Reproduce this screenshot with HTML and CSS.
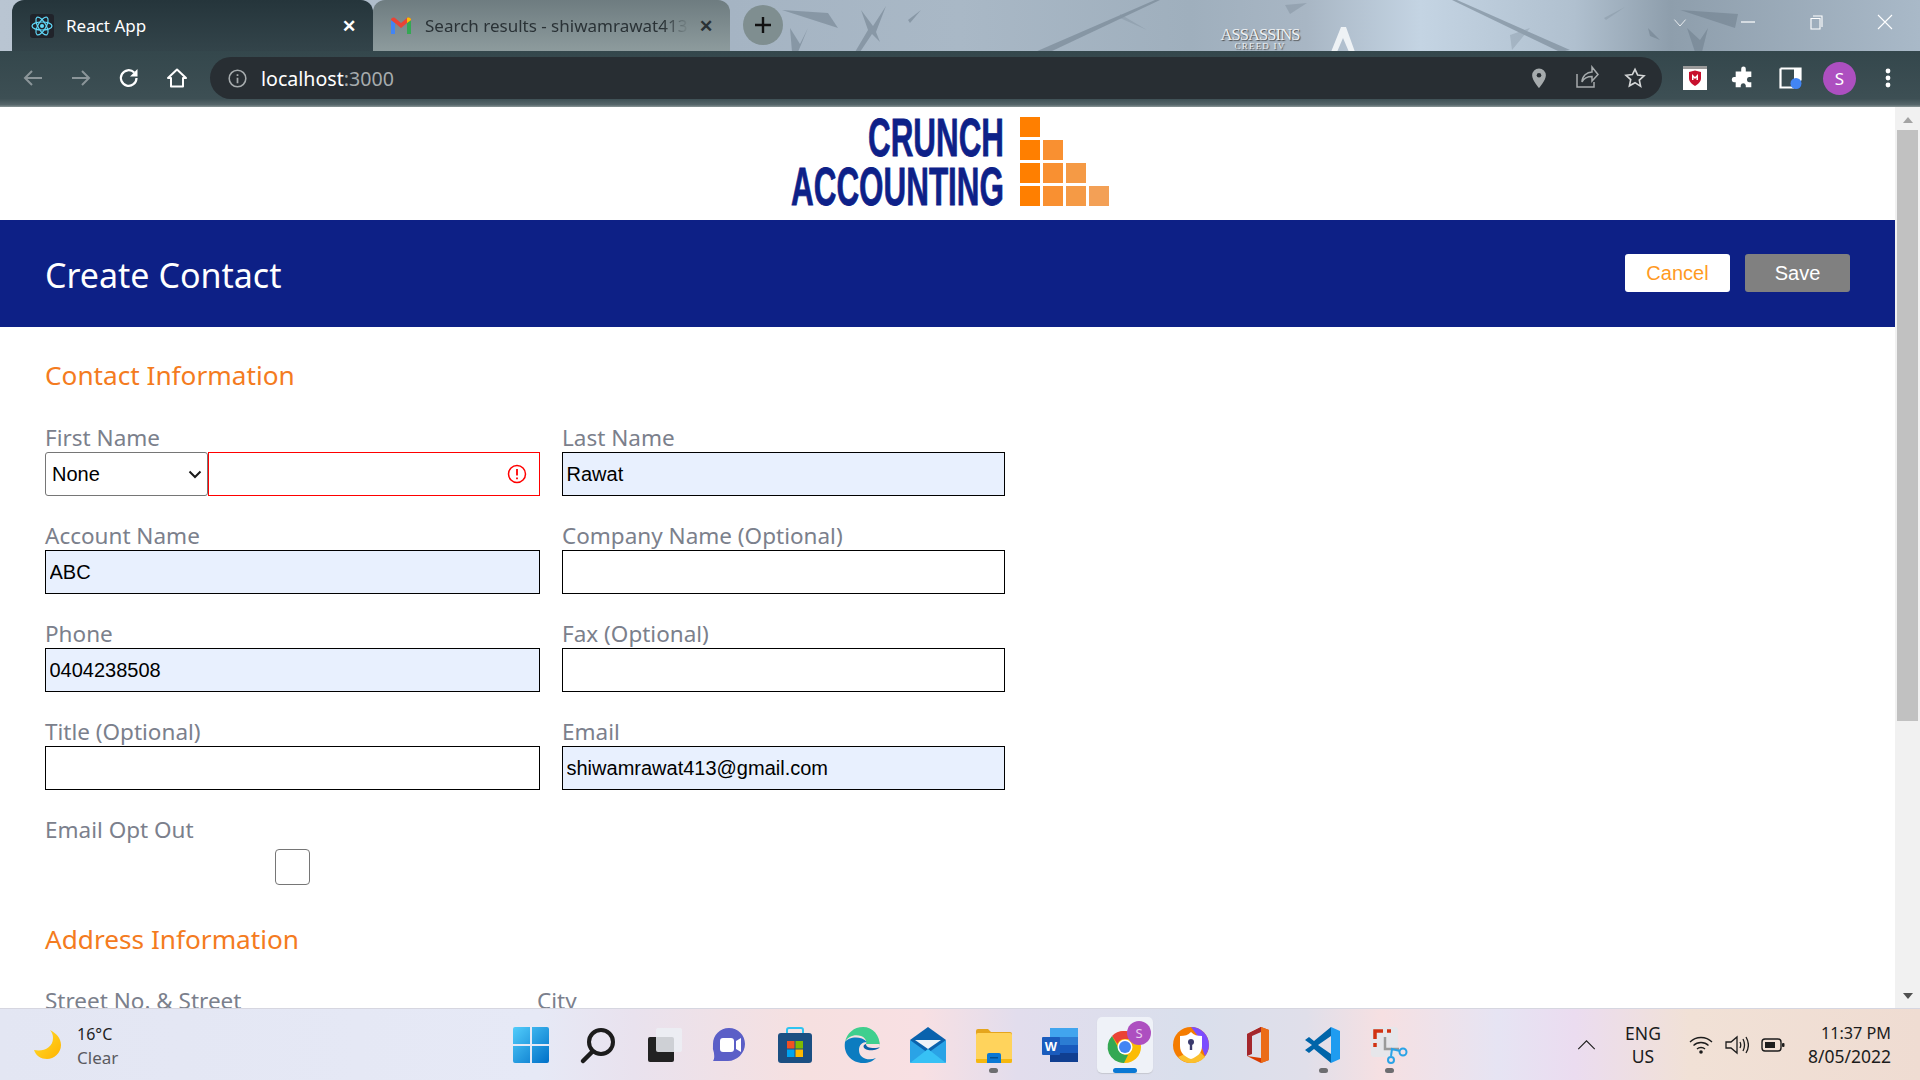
FILE: index.html
```html
<!DOCTYPE html>
<html lang="en">
<head>
<meta charset="utf-8">
<title>React App</title>
<link rel="stylesheet" href="styles.css">
</head>
<body>
<div class="browser">
  <svg class="theme" viewBox="0 0 1920 52" preserveAspectRatio="none" aria-hidden="true">
    <defs>
      <linearGradient id="sky" x1="0" x2="1" y1="0" y2="0">
        <stop offset="0" stop-color="#b9c5d2"/><stop offset=".38" stop-color="#a5b4c3"/><stop offset=".5" stop-color="#a9b8c6"/>
        <stop offset=".62" stop-color="#9fafbd"/><stop offset=".68" stop-color="#a8b6c4"/><stop offset=".74" stop-color="#c4d4e3"/><stop offset=".82" stop-color="#b0c0cf"/><stop offset=".87" stop-color="#8e9eac"/><stop offset="1" stop-color="#a9b9c8"/>
      </linearGradient>
    </defs>
    <rect width="1920" height="52" fill="url(#sky)"/>
    <g fill="#6f7f8d" opacity=".55">
      <polygon points="782,10 828,13 838,28"/>
      <polygon points="790,28 800,44 808,28 798,52 792,52"/>
      <polygon points="861,10 873,26 886,6 876,32 880,42 872,34 860,52 855,52 868,30"/>
      <polygon points="908,20 921,10 910,23"/>
      <polygon points="1035,52 1155,0 1160,0 1050,52"/>
      <polygon points="1120,14 1147,30 1120,18" opacity=".5"/>
      <polygon points="1285,5 1307,3 1290,14" opacity=".6"/>
      <polygon points="1452,0 1457,0 1570,50 1560,52"/>
      <polygon points="1510,35 1530,28 1512,50" opacity=".5"/>
      <polygon points="1604,18 1625,7 1606,20" opacity=".5"/>
      <polygon points="1680,10 1738,14 1735,28"/>
      <polygon points="1648,28 1660,40 1650,36"/>
      <polygon points="1687,28 1700,40 1708,28 1702,52 1695,52"/>
    </g>
    <g fill="#eef2f5">
      <polygon points="1331,52 1341,27 1346,27 1355,52 1349,52 1343,38 1337,52"/>
    </g>
  </svg>

  <header class="tabstrip">
    <div class="tab tab-active">
      <svg class="tab-icon" viewBox="0 0 24 24"><rect width="24" height="24" rx="3" fill="#20232a"/><g fill="none" stroke="#61dafb" stroke-width="1.2"><ellipse cx="12" cy="12" rx="10" ry="4"/><ellipse cx="12" cy="12" rx="10" ry="4" transform="rotate(60 12 12)"/><ellipse cx="12" cy="12" rx="10" ry="4" transform="rotate(120 12 12)"/></g><circle cx="12" cy="12" r="2" fill="#61dafb"/></svg>
      <span class="tab-title">React App</span>
      <span class="tab-close">✕</span>
    </div>
    <div class="tab tab-idle">
      <svg class="tab-icon" viewBox="0 0 24 24"><path d="M2 20V6l4 3v11z" fill="#4285f4"/><path d="M18 20V9l4-3v14z" fill="#34a853"/><path d="M2 6c0-2 2-3 4-2l6 5 6-5c2-1 4 0 4 2l-4 3-6 5-6-5z" fill="#ea4335"/><path d="M18 4c2-1 4 0 4 2l-4 3z" fill="#fbbc04"/></svg>
      <span class="tab-title tab-fade">Search results - shiwamrawat413</span>
      <span class="tab-close">✕</span>
    </div>
    <button class="newtab" aria-label="New tab"><svg viewBox="0 0 20 20"><path d="M10 2v16M2 10h16" stroke="#111" stroke-width="2.4"/></svg></button>
    <div class="ac-logo"><span class="ac-name">ASSASSINS</span><span class="ac-sub">CREED IV</span></div>
    <div class="winctl">
      <svg viewBox="0 0 20 20" class="wc wc-chev"><path d="M3 7l7 8 7-8" fill="none" stroke="#fff" stroke-width="1"/></svg>
      <svg viewBox="0 0 20 20" class="wc wc-min"><path d="M3 10h14" stroke="#fff" stroke-width="1.2"/></svg>
      <svg viewBox="0 0 20 20" class="wc"><path d="M6 4h9v11M4 6.500h9V17H4z" fill="none" stroke="#fff" stroke-width="1.1"/></svg>
      <svg viewBox="0 0 20 20" class="wc wc-last"><path d="M3 3l14 14M17 3L3 17" stroke="#fff" stroke-width="1.1"/></svg>
    </div>
  </header>

  <nav class="toolbar">
    <div class="tb-nav">
      <svg viewBox="0 0 24 24" class="tb-ic"><path d="M21 12H4M11 5l-7 7 7 7" fill="none" stroke="#8b9599" stroke-width="2"/></svg>
      <svg viewBox="0 0 24 24" class="tb-ic"><path d="M3 12h17M13 5l7 7-7 7" fill="none" stroke="#8b9599" stroke-width="2"/></svg>
      <svg viewBox="0 0 24 24" class="tb-ic"><path d="M19.500 12a7.800 7.800 0 1 1-2.300-5.500" fill="none" stroke="#fff" stroke-width="2.2"/><path d="M20.500 3v7.500H13z" fill="#fff"/></svg>
      <svg viewBox="0 0 24 24" class="tb-ic"><path d="M12 3.500l9 8.500h-3v8.500H6V12H3z" fill="none" stroke="#fff" stroke-width="2" stroke-linejoin="round"/></svg>
    </div>
    <div class="omnibox">
      <svg viewBox="0 0 24 24" class="om-info"><circle cx="12" cy="12" r="9.500" fill="none" stroke="#a6abad" stroke-width="1.800"/><path d="M12 11v6.500M12 7v2" stroke="#a6abad" stroke-width="2"/></svg>
      <span class="url">localhost<span class="url-dim">:3000</span></span>
      <span class="om-spacer"></span>
      <svg viewBox="0 0 24 24" class="om-ic om-pin"><path d="M12 1.500a7.500 7.500 0 0 0-7.500 7.500c0 5.500 7.500 14 7.500 14s7.500-8.500 7.500-14A7.500 7.500 0 0 0 12 1.500z" fill="#a6abad"/><circle cx="12" cy="9" r="2.500" fill="#282e33"/></svg>
      <svg viewBox="0 0 24 24" class="om-ic om-share"><path d="M2 9v13h17v-5M7 17c0-6 5-10 10-10V2l6 7.500-6 6.500v-4.500c-4 0-8 1.500-10 5.500z" fill="none" stroke="#a6abad" stroke-width="1.500"/></svg>
      <svg viewBox="0 0 24 24" class="om-ic"><path d="M12 2.500l2.900 6.300 6.900.8-5.100 4.700 1.400 6.800L12 17.100l-6.100 3.400 1.400-6.800-5.100-4.700 6.900-.8z" fill="none" stroke="#d4d6d7" stroke-width="1.800"/></svg>
    </div>
    <div class="tb-ext">
      <svg viewBox="0 0 24 24" class="tb-ic"><rect x="0" y="0" width="24" height="24" fill="#fff"/><rect width="24" height="3" fill="#9a9a9a"/><path d="M6 6l6-1.500L18 6v6c0 4-3 6-6 8-3-2-6-4-6-8z" fill="#c8102e"/><path d="M9 8l3 3 3-3v6h-1.500v-2.500L12 13l-1.500-1.500V14H9z" fill="#fff"/></svg>
      <svg viewBox="0 0 24 24" class="tb-ic"><path d="M10 2a2.500 2.500 0 0 1 5 0v3h6v6h-2.500a2.800 2.800 0 0 0 0 5.500H21V22h-6v-2a2.800 2.800 0 0 0-5.500 0v2H4v-5.500H2a2.800 2.800 0 0 1 0-5.500h2V5h6z" fill="#fff" transform="translate(1 1) scale(.92)"/></svg>
      <svg viewBox="0 0 24 24" class="tb-ic"><path d="M1.500 2.500h20v12M15 21.500H1.500v-19" fill="none" stroke="#fff" stroke-width="2.200"/><rect x="15" y="2" width="7" height="14" fill="#fff"/><circle cx="17" cy="17.500" r="5.500" fill="#4285f4"/></svg>
      <span class="avatar">S</span>
      <svg viewBox="0 0 24 24" class="tb-ic"><g fill="#fff"><circle cx="12" cy="5" r="2.400"/><circle cx="12" cy="12" r="2.400"/><circle cx="12" cy="19" r="2.400"/></g></svg>
    </div>
  </nav>

  <main class="viewport">
    <div class="page">
      <div class="logo-row">
        <svg class="logo" viewBox="0 0 330 114" role="img" aria-label="Crunch Accounting">
          <text class="logo-text" x="87" y="49" textLength="136" lengthAdjust="spacingAndGlyphs">CRUNCH</text>
          <text class="logo-text" x="10" y="98" textLength="213" lengthAdjust="spacingAndGlyphs">ACCOUNTING</text>
          <g fill="#ff7f00"><rect x="239" y="10" width="20" height="20"/><rect x="239" y="33" width="20" height="20"/><rect x="239" y="56" width="20" height="20"/><rect x="239" y="79" width="20" height="20"/></g>
          <g fill="#f99031"><rect x="262" y="33" width="20" height="20"/><rect x="262" y="56" width="20" height="20"/><rect x="262" y="79" width="20" height="20"/></g>
          <g fill="#f59a45"><rect x="285" y="56" width="20" height="20"/><rect x="285" y="79" width="20" height="20"/></g>
          <rect x="308" y="79" width="20" height="20" fill="#f3a056"/>
        </svg>
      </div>
      <section class="banner">
        <h1 class="banner-title">Create Contact</h1>
        <div class="banner-actions">
          <button class="btn btn-cancel">Cancel</button>
          <button class="btn btn-save">Save</button>
        </div>
      </section>
      <form class="form">
        <h2 class="section">Contact Information</h2>
        <div class="fields">
          <div class="field">
            <label class="label">First Name</label>
            <div class="name-pair">
              <div class="select-wrap">
                <select class="salutation"><option>None</option></select>
                <svg viewBox="0 0 14 9" class="select-chev"><path d="M1.500 1.500L7 7l5.500-5.500" fill="none" stroke="#1a1a1a" stroke-width="2"/></svg>
              </div>
              <div class="invalid">
                <svg viewBox="0 0 20 20" class="alert"><circle cx="10" cy="10" r="8.500" fill="none" stroke="#f00" stroke-width="1.500"/><path d="M10 5v6.500M10 13.500v1.800" stroke="#f00" stroke-width="1.800"/></svg>
              </div>
            </div>
          </div>
          <div class="field"><label class="label">Last Name</label><input class="input filled" value="Rawat"></div>
          <div class="field"><label class="label">Account Name</label><input class="input filled" value="ABC"></div>
          <div class="field"><label class="label">Company Name (Optional)</label><input class="input"></div>
          <div class="field"><label class="label">Phone</label><input class="input filled" value="0404238508"></div>
          <div class="field"><label class="label">Fax (Optional)</label><input class="input"></div>
          <div class="field"><label class="label">Title (Optional)</label><input class="input"></div>
          <div class="field"><label class="label">Email</label><input class="input filled" value="shiwamrawat413@gmail.com"></div>
          <div class="field"><label class="label">Email Opt Out</label><span class="check-wrap"><span class="check"></span></span></div>
        </div>
        <h2 class="section section-addr">Address Information</h2>
        <div class="addr-labels">
          <label class="label addr-street">Street No. &amp; Street</label>
          <label class="label">City</label>
        </div>
      </form>
    </div>
    <div class="scrollbar">
      <span class="sb-arrow sb-up"></span>
      <span class="sb-thumb"></span>
      <span class="sb-arrow sb-down"></span>
    </div>
  </main>

  <footer class="taskbar">
    <div class="weather">
      <svg viewBox="0 0 32 32" class="moon"><defs><linearGradient id="moon" x1="0" y1="0" x2="1" y2="1"><stop offset="0" stop-color="#ffdf30"/><stop offset="1" stop-color="#ffb300"/></linearGradient></defs><path d="M18 1c6 3 11 8 11 15 0 8-7 14-14 14C9 30 4 27 2 21c9 2 19-2 19-12 0-3-1-6-3-8z" fill="url(#moon)"/></svg>
      <div class="weather-text"><span class="temp">16°C</span><span class="sky">Clear</span></div>
    </div>
    <div class="apps">
      <span class="app"><svg viewBox="0 0 36 36" class="app-ic"><defs><linearGradient id="win" x1="0" y1="0" x2="1" y2="1"><stop offset="0" stop-color="#52cdfb"/><stop offset="1" stop-color="#0070c8"/></linearGradient></defs><path d="M0 2a2 2 0 0 1 2-2h15v17H0zM19 0h15a2 2 0 0 1 2 2v15H19zM0 19h17v17H2a2 2 0 0 1-2-2zM19 19h17v15a2 2 0 0 1-2 2H19z" fill="url(#win)"/></svg></span>
      <span class="app"><svg viewBox="0 0 36 36" class="app-ic"><circle cx="22" cy="15" r="12" fill="none" stroke="#1c1c1c" stroke-width="4"/><path d="M13 25L4 34" stroke="#1c1c1c" stroke-width="4.500" stroke-linecap="round"/></svg></span>
      <span class="app"><svg viewBox="0 0 36 36" class="app-ic"><rect x="3" y="10" width="26" height="25" rx="2" fill="#222"/><rect x="11" y="1" width="26" height="24" rx="2" fill="#eceef4" opacity=".85"/></svg></span>
      <span class="app"><svg viewBox="0 0 36 36" class="app-ic"><path d="M18 1c9 0 16 7 16 16s-8 17-17 17H2c2-3 1-6 1-8a19 19 0 0 1-1-9C2 8 9 1 18 1z" fill="#5b5fc7"/><rect x="9" y="11" width="14" height="14" rx="3" fill="#fff"/><path d="M25 14l5-3v14l-5-3z" fill="#fff"/></svg></span>
      <span class="app"><svg viewBox="0 0 36 36" class="app-ic"><path d="M10 6V3a2 2 0 0 1 2-2h12a2 2 0 0 1 2 2v3" fill="none" stroke="#2ec4f1" stroke-width="2"/><rect x="1" y="6" width="34" height="30" rx="3" fill="#1b4f82"/><rect x="10" y="14" width="7.500" height="7.500" fill="#f25022"/><rect x="18.500" y="14" width="7.500" height="7.500" fill="#7fba00"/><rect x="10" y="22.500" width="7.500" height="7.500" fill="#00a4ef"/><rect x="18.500" y="22.500" width="7.500" height="7.500" fill="#ffb900"/></svg></span>
      <span class="app"><svg viewBox="0 0 36 36" class="app-ic app-nudge"><path d="M36 20C36 8 29 0 19 0 10 0 3 6 1 15c3-6 10-8 16-6 5 2 6 6 5 8h14z" fill="#3fcf8e"/><path d="M1 15C-1 27 8 36 19 36c6 0 10-2 13-5-7 3-17 1-17-8 0-5 3-8 8-8-6-7-19-5-22 0z" fill="#0c7cc0"/><path d="M22 17c0 4 5 4 10 4 2 0 4-1 4-1-1 2-7 4-12 3-5-1-6-5-2-6z" fill="#0c5fa6"/></svg></span>
      <span class="app"><svg viewBox="0 0 36 36" class="app-ic app-nudge"><rect x="0" y="13" width="36" height="23" rx="1" fill="#2aa3e6"/><path d="M0 13L18 0l18 13-18 13z" fill="#0a62ad"/><path d="M5 13h26l-13 9z" fill="#eef3f8"/><path d="M0 36l18-14 18 14z" fill="#37c1f5"/></svg></span>
      <span class="app app-run"><svg viewBox="0 0 36 36" class="app-ic app-nudge"><path d="M0 4a2 2 0 0 1 2-2h10l3 3h19a2 2 0 0 1 2 2v27a2 2 0 0 1-2 2H2a2 2 0 0 1-2-2z" fill="#e5a51d"/><rect x="0" y="6" width="36" height="30" rx="2" fill="#ffd35c"/><path d="M0 32h36v2a2 2 0 0 1-2 2H2a2 2 0 0 1-2-2z" fill="#f5b70f"/><path d="M11 28a2 2 0 0 1 2-2h10a2 2 0 0 1 2 2v8H11z" fill="#0a78d4"/><rect x="14" y="30" width="8" height="1.500" fill="#04508f"/></svg></span>
      <span class="app"><svg viewBox="0 0 36 36" class="app-ic app-nudge"><rect x="8" y="1" width="28" height="34" rx="2" fill="#185abd"/><rect x="8" y="1" width="28" height="9" fill="#41a5ee"/><rect x="8" y="10" width="28" height="8" fill="#2b7cd3"/><rect x="8" y="26" width="28" height="9" fill="#103f91"/><rect x="0" y="10" width="18" height="18" rx="1" fill="#1a5cbd"/><text x="9" y="24" class="word-w">W</text></svg></span>
      <span class="app app-active"><svg viewBox="0 0 36 36" class="app-ic"><circle cx="18" cy="20" r="16" fill="#fbbc04"/><path d="M18 4a16 16 0 0 1 14 8H18a8 8 0 0 0-7.500 5L5 9a16 16 0 0 1 13-5z" fill="#ea4335"/><path d="M5 9l7 13a8 8 0 0 0 9 6l-4 8A16 16 0 0 1 5 9z" fill="#34a853"/><circle cx="18" cy="20" r="7.500" fill="#fff"/><circle cx="18" cy="20" r="6" fill="#4285f4"/></svg><span class="app-badge">S</span></span>
      <span class="app"><svg viewBox="0 0 36 36" class="app-ic"><circle cx="18" cy="18" r="18" fill="#f57c00"/><path d="M18 0a18 18 0 0 1 18 18 18 18 0 0 1-4 11L24 8z" fill="#7c4dff"/><path d="M5 30a18 18 0 0 0 27 0l-8-8z" fill="#fbc02d"/><path d="M7 9c5 0 8-1 11-4 3 3 6 4 11 4v10c0 7-5 11-11 13C12 30 7 26 7 19z" fill="#fff"/><circle cx="18" cy="15" r="3" fill="#3b3b6d"/><rect x="16.800" y="15" width="2.400" height="8" fill="#3b3b6d"/></svg></span>
      <span class="app"><svg viewBox="0 0 36 36" class="app-ic app-nudge"><path d="M7 7l14-7 8 3v30l-8 3-14-7 14 2V5z" fill="#d83b01"/><path d="M7 7l14-7v5L12 9v18l-5 2z" fill="#a4262c"/><path d="M21 0l8 3v30l-8 3z" fill="#eb6c18"/></svg></span>
      <span class="app app-run"><svg viewBox="0 0 36 36" class="app-ic"><path d="M26 0l9 4v28l-9 4z" fill="#1f9cf0"/><path d="M26 0v9L13 18l13 9v9L9 22l-5 4-4-3 7-5-7-5 4-3 5 4z" fill="#0065a9"/></svg></span>
      <span class="app app-run"><svg viewBox="0 0 36 36" class="app-ic"><rect x="0" y="0" width="27" height="30" rx="3" fill="#e6e6ea"/><path d="M4 12V4h8M16 4h4M4 16v4" fill="none" stroke="#d13212" stroke-width="3.500"/><path d="M14 10v12h14" fill="none" stroke="#9a9a9a" stroke-width="2.500"/><circle cx="32" cy="25" r="3.500" fill="none" stroke="#2aa3e6" stroke-width="2"/><circle cx="20" cy="33" r="3" fill="none" stroke="#2aa3e6" stroke-width="2"/><path d="M20 29l1-7 8 2" fill="none" stroke="#2aa3e6" stroke-width="2"/></svg></span>
    </div>
    <div class="tray">
      <svg viewBox="0 0 20 12" class="tray-chev"><path d="M1 11l9-9 9 9" fill="none" stroke="#1c1c1c" stroke-width="1.200"/></svg>
      <div class="lang"><span>ENG</span><span>US</span></div>
      <svg viewBox="0 0 24 20" class="tray-ic"><g fill="none" stroke="#1c1c1c" stroke-width="1.300"><path d="M1 7c6-6 16-6 22 0"/><path d="M4.500 10.500c4-4 11-4 15 0"/><path d="M8 14c2-2 6-2 8 0"/></g><circle cx="12" cy="17" r="1.800" fill="#1c1c1c"/></svg>
      <svg viewBox="0 0 24 20" class="tray-ic"><path d="M1 7h5l6-5v16l-6-5H1z" fill="none" stroke="#1c1c1c" stroke-width="1.300"/><path d="M15 7c1 2 1 4 0 6M18 4c2 4 2 8 0 12M21 2c3 5 3 11 0 16" fill="none" stroke="#1c1c1c" stroke-width="1.300"/></svg>
      <svg viewBox="0 0 24 20" class="tray-ic"><rect x="1" y="4" width="19" height="12" rx="3" fill="none" stroke="#1c1c1c" stroke-width="1.400"/><rect x="4" y="7" width="10" height="6" fill="#1c1c1c"/><rect x="21" y="8" width="2.500" height="4" rx="1" fill="#1c1c1c"/></svg>
      <div class="clock"><span class="clock-time">11:37 PM</span><span class="clock-date">8/05/2022</span></div>
    </div>
  </footer>
</div>
</body>
</html>
```
FILE: styles.css
```css
* { box-sizing: border-box; }
html, body { margin: 0; height: 100%; overflow: hidden; }
body { font-family: "Noto Sans", "Open Sans", sans-serif; }
.browser { position: relative; height: 1080px; display: flex; flex-direction: column; background: #fff; }
.theme { position: absolute; left: 0; top: 0; width: 1920px; height: 52px; }

/* tab strip */
.tabstrip { position: relative; height: 51px; display: flex; align-items: stretch; padding-left: 12px; flex: none; }
.tab { display: flex; align-items: center; border-radius: 12px 12px 0 0; padding: 0 17px 0 18px; }
.tab-active { width: 361px; color: #fff; background: linear-gradient(#25353b, #33444a); }
.tab-idle { width: 357px; padding-left: 16px; color: #2a3236; background: linear-gradient(#6e7c80, #8d9b9d); }
.tab-icon { width: 24px; height: 24px; flex: none; }
.tab-title { margin-left: 12px; flex: 1; font-size: 17px; white-space: nowrap; overflow: hidden; }
.tab-fade { -webkit-mask-image: linear-gradient(90deg, #000 90%, transparent 100%); mask-image: linear-gradient(90deg, #000 90%, transparent 100%); }
.tab-close { font-size: 17px; font-weight: 700; margin-left: 10px; }
.newtab { width: 40px; height: 40px; margin: 5px 0 0 13px; border: 0; padding: 0; border-radius: 50%; background: #7f8e90; display: flex; align-items: center; justify-content: center; }
.newtab svg { width: 20px; height: 20px; }
.ac-logo { position: absolute; left: 1220px; top: 27px; width: 80px; display: flex; flex-direction: column; align-items: center; color: #eef0f2; font-family: "Liberation Serif", serif; line-height: 1; text-shadow: 1px 1px 1px #4a4a4a; }
.ac-name { font-size: 16.500px; letter-spacing: -.9px; }
.ac-sub { font-size: 9px; letter-spacing: 1.200px; margin-top: -2px; }
.winctl { margin-left: auto; display: flex; align-items: flex-start; padding-top: 12px; }
.wc { width: 20px; height: 20px; margin-right: 48px; }
.wc-chev { width: 16px; margin-right: 50px; }
.wc-min { margin-right: 49px; }
.wc-last { margin-right: 25px; }

/* toolbar */
.toolbar { position: relative; height: 56px; flex: none; display: flex; align-items: flex-start; padding-top: 6px; background: linear-gradient(#34474c, #3d4f54 85%, #56666a 96%, #8a9698); }
.tb-nav { display: flex; align-items: center; height: 42px; padding-left: 21px; gap: 24px; width: 210px; }
.tb-ic { width: 24px; height: 24px; flex: none; }
.omnibox { width: 1452px; height: 42px; border-radius: 21px; background: #282e33; display: flex; align-items: center; padding: 0 16px 0 17px; }
.om-info { width: 21px; height: 21px; flex: none; }
.url { margin-left: 13px; padding-top: 1px; font-size: 19.600px; color: #fff; white-space: nowrap; }
.url-dim { color: #a6abad; }
.om-spacer { flex: 1; }
.om-ic { width: 22px; height: 22px; margin-left: 26px; flex: none; }
.om-pin { margin-right: -1px; }
.om-share { width: 24px; height: 24px; margin-right: -1px; margin-top: -2px; }
.tb-ext { display: flex; align-items: center; height: 42px; padding-left: 21px; gap: 24px; }
.avatar { width: 33px; height: 33px; margin: 0 -4px; border-radius: 50%; background: #ad4fc0; color: #fff; font-size: 17px; display: flex; align-items: center; justify-content: center; flex: none; }

/* page */
.viewport { flex: 1; min-height: 0; display: flex; overflow: hidden; background: #fff; }
.page { flex: 1; min-width: 0; overflow: hidden; }
.logo-row { height: 113px; display: flex; justify-content: center; }
.logo { width: 330px; height: 114px; margin-left: -4px; }
.logo-text { font-family: "Liberation Sans", sans-serif; font-weight: 700; font-size: 54px; fill: #0e2188; stroke: #0e2188; stroke-width: .8px; }
.banner { height: 107px; background: #0d2086; display: flex; align-items: center; justify-content: space-between; padding: 0 45px; }
.banner-title { margin: 2px 0 0; font-size: 34px; font-weight: 400; color: #fff; }
.banner-actions { display: flex; gap: 15px; margin-top: -1px; }
.btn { width: 105px; height: 38px; border: 0; border-radius: 3px; font-family: "Liberation Sans", sans-serif; font-size: 20px; padding: 0; }
.btn-cancel { background: #fff; color: #ff9a1f; }
.btn-save { background: #808080; color: #fff; }

.form { padding: 28px 0 0 45px; }
.section { margin: 0; font-size: 26.200px; line-height: 40px; font-weight: 400; color: #f47b20; }
.fields { display: grid; grid-template-columns: 495px 443px; column-gap: 22px; row-gap: 26px; margin-top: 29px; }
.field { display: flex; flex-direction: column; }
.label { font-size: 22.500px; line-height: 28px; color: #7b808c; white-space: nowrap; }
.input { height: 44px; width: 100%; padding: 0 4px 0 3.500px; border: 1.500px solid #000; border-radius: 0; background: #fff; font-family: "Liberation Sans", sans-serif; font-size: 20px; color: #000; outline: 0; }
.filled { background: #e8f0fe; }
.name-pair { display: flex; height: 44px; }
.select-wrap { position: relative; width: 163px; height: 44px; flex: none; }
.salutation { width: 100%; height: 44px; padding-left: 6px; border: 1px solid #767676; border-radius: 3px; background: #fff; font-family: "Liberation Sans", sans-serif; font-size: 20px; color: #000; appearance: none; -webkit-appearance: none; }
.select-chev { position: absolute; right: 6px; top: 18px; width: 14px; height: 9px; pointer-events: none; }
.invalid { flex: 1; border: 1.500px solid #f00; display: flex; align-items: center; justify-content: flex-end; padding-right: 12px; }
.alert { width: 20px; height: 20px; }
.check-wrap { display: flex; justify-content: center; padding-top: 5px; }
.check { width: 35px; height: 36px; border: 1.500px solid #767676; border-radius: 4px; background: #fff; }
.section-addr { margin-top: 34px; }
.addr-labels { display: flex; margin-top: 28px; }
.addr-street { width: 492px; }

/* scrollbar */
.scrollbar { width: 25px; flex: none; background: #f1f1f1; display: flex; flex-direction: column; align-items: center; }
.sb-thumb { width: 21px; height: 591px; background: #c1c1c1; margin-top: 7px; }
.sb-arrow { width: 0; height: 0; border-left: 5.500px solid transparent; border-right: 5.500px solid transparent; }
.sb-up { margin-top: 10px; border-bottom: 6px solid #a3a3a3; }
.sb-down { margin-top: auto; margin-bottom: 9px; border-top: 6px solid #505050; }

/* taskbar */
.taskbar { height: 72px; flex: none; position: relative; display: flex; align-items: center; border-top: 1px solid #d6d6e0; background: linear-gradient(90deg, #e3e6f3 0, #e6e9f6 28%, #e9e2ee 33%, #f6e0e0 42%, #f8e0e3 48%, #e2dded 53%, #d9dfec 62%, #e0dfea 68%, #f6e0e2 72%, #e6e4f3 78%, #ebdcf0 82%, #f1e1d6 88%, #efdcd2 100%); }
.weather { width: 498px; height: 100%; display: flex; align-items: center; padding-left: 32px; flex: none; }
.moon { width: 32px; height: 32px; flex: none; }
.weather-text { margin-left: 13px; padding-top: 2px; display: flex; flex-direction: column; font-size: 16px; line-height: 24px; color: #1f1f1f; }
.sky { color: #5a5a60; font-size: 17px; }
.apps { display: flex; flex: none; }
.app { position: relative; width: 66px; height: 56px; display: flex; align-items: center; justify-content: center; border-radius: 5px; }
.app-ic { width: 36px; height: 36px; overflow: visible; }
.app-nudge { margin-left: 2px; }
.app-run::after { content: ""; position: absolute; left: 29px; bottom: 0; width: 9px; height: 5px; border-radius: 3px; background: #6d6d70; }
.app-active { width: 56px; margin: 0 5px; background: #eff2f8; box-shadow: 0 1px 1px #c5c7d0; }
.app-active::after { content: ""; position: absolute; left: 16px; bottom: 0; width: 24px; height: 5px; border-radius: 3px; background: #0a78d4; }
.app-badge { position: absolute; right: 2px; top: 4px; width: 24px; height: 24px; border-radius: 50%; background: #ad4fc0; color: #e8d0ee; font-size: 13px; display: flex; align-items: center; justify-content: center; }
.word-w { font-family: "Liberation Sans", sans-serif; font-weight: 700; font-size: 13px; fill: #fff; text-anchor: middle; }
.tray { flex: 1; height: 100%; display: flex; align-items: center; color: #1c1c1c; }
.tray-chev { width: 19px; height: 11px; margin-left: 155px; flex: none; }
.lang { width: 50px; margin-left: 22px; display: flex; flex-direction: column; align-items: center; font-size: 17.500px; line-height: 23px; flex: none; }
.tray-ic { width: 24px; height: 20px; margin-left: 12px; flex: none; }
.lang + .tray-ic { margin-left: 21px; }
.clock { margin-left: auto; padding-right: 29px; display: flex; flex-direction: column; align-items: flex-end; line-height: 23px; }
.clock-time { font-size: 16.200px; }
.clock-date { font-size: 17.500px; }
```
